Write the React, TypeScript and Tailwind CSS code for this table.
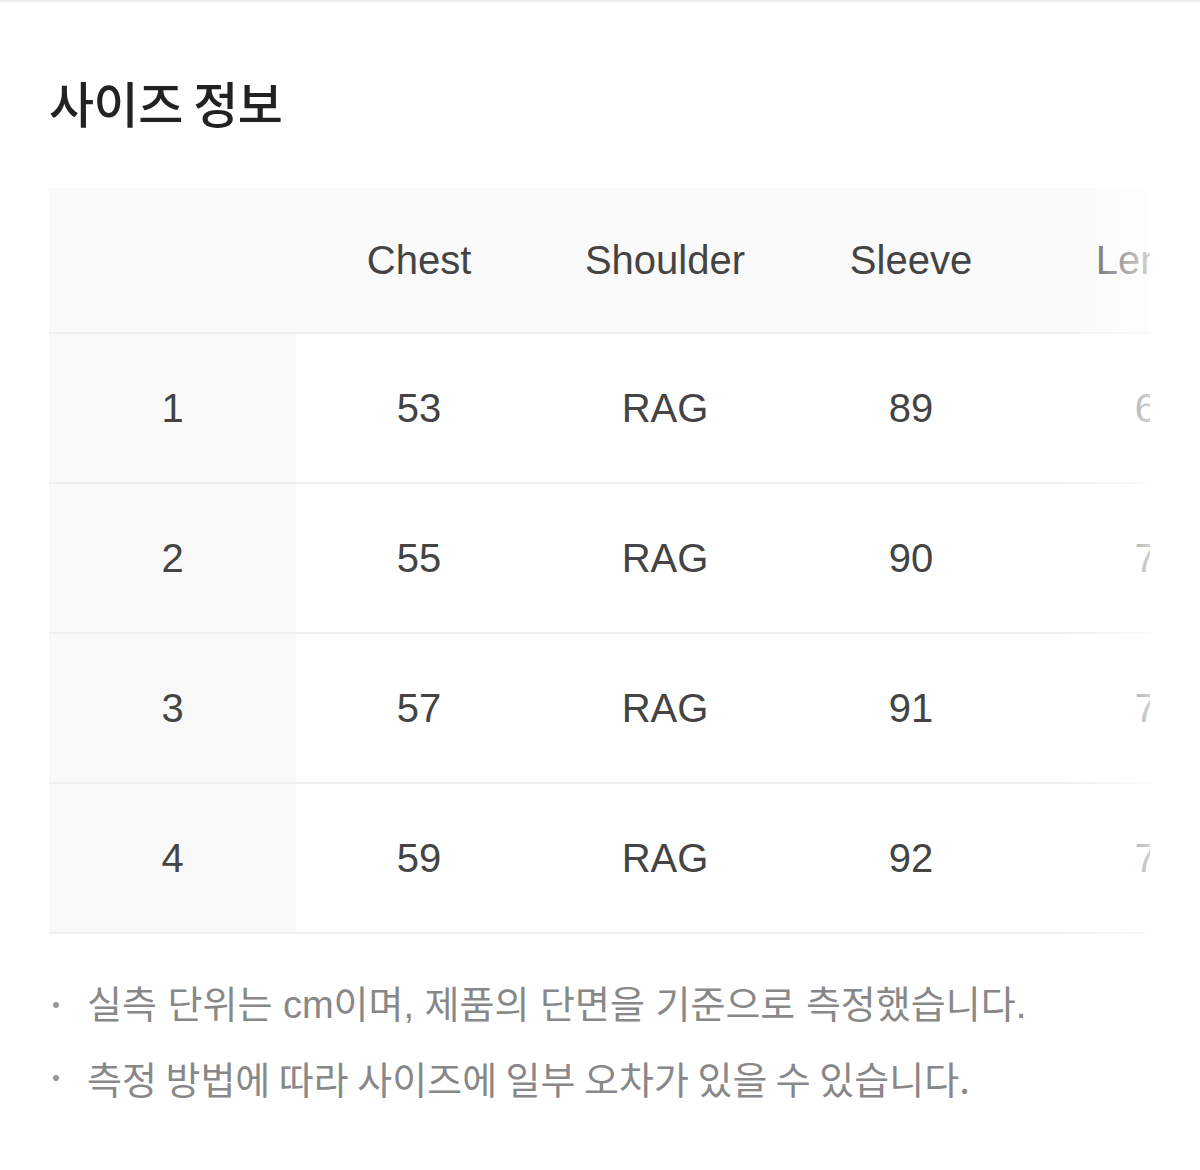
import React from "react";

const cols = ["Chest", "Shoulder", "Sleeve", "Length"];
const rows = [
  ["1", "53", "RAG", "89", "67"],
  ["2", "55", "RAG", "90", "70"],
  ["3", "57", "RAG", "91", "72"],
  ["4", "59", "RAG", "92", "74"],
];

export default function App() {
  return (
    <div
      className="w-[1200px] h-[1170px] bg-white border-t-2 border-[#ececec]"
      style={{ fontFamily: '"Liberation Sans", "Noto Sans CJK KR", sans-serif' }}
    >
      <div className="pl-[49px]">
        <h1
          className="pt-[68px] text-[49px] leading-[64px] font-medium text-[#222] tracking-[-0.5px]"
          style={{ fontFamily: '"Noto Sans CJK KR", sans-serif' }}
        >
          사이즈 정보
        </h1>
        <div className="relative mt-[54px] w-[1101px] overflow-hidden">
          <div className="w-[1300px]">
            <div className="flex h-[146px] bg-[#fafafa] border-b-2 border-[#efefef]">
              <div className="w-[247px] shrink-0" />
              {cols.map((c) => (
                <div
                  key={c}
                  className="w-[246px] shrink-0 flex items-center justify-center text-[40px] text-[#444]"
                >
                  {c}
                </div>
              ))}
            </div>
            {rows.map((r) => (
              <div key={r[0]} className="flex h-[150px] border-b-2 border-[#efefef]">
                <div className="w-[247px] shrink-0 bg-[#f9f9f9] flex items-center justify-center text-[40px] text-[#444]">
                  {r[0]}
                </div>
                {r.slice(1).map((v, i) => (
                  <div
                    key={i}
                    className="w-[246px] shrink-0 flex items-center justify-center text-[40px] text-[#444]"
                  >
                    {v}
                  </div>
                ))}
              </div>
            ))}
          </div>
          <div className="absolute top-0 right-0 h-full w-[90px] bg-gradient-to-r from-white/0 to-white/75" />
        </div>
        <ul
          className="mt-[50px] flex flex-col gap-[31px] text-[38px] leading-[42px] text-[#888]"
          style={{ fontFamily: '"Noto Sans CJK KR", sans-serif' }}
        >
          <li className="flex items-center">
            <span className="w-[6px] h-[6px] rounded-full bg-[#999] ml-[4px] mr-[28px]" />
            <span style={{ fontFamily: '"Liberation Sans", "Noto Sans CJK KR", sans-serif' }}>
              실측 단위는 cm이며, 제품의 단면을 기준으로 측정했습니다.
            </span>
          </li>
          <li className="flex items-center">
            <span className="w-[6px] h-[6px] rounded-full bg-[#999] ml-[4px] mr-[28px]" />
            <span>측정 방법에 따라 사이즈에 일부 오차가 있을 수 있습니다.</span>
          </li>
        </ul>
      </div>
    </div>
  );
}
